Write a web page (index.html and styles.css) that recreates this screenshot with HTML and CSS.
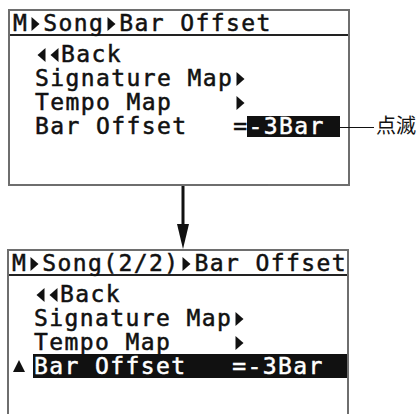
FILE: index.html
```html
<!DOCTYPE html>
<html lang="en">
<head>
  <meta charset="UTF-8">
  <title>Bar Offset</title>
  <link rel="stylesheet" href="styles.css">
</head>
<body>
  <div class="screen">
    <div class="title">M<svg class="tri" viewBox="0 0 10 16"><polygon points="1,1 9,8 1,15"/></svg>Song<svg class="tri" viewBox="0 0 10 16"><polygon points="1,1 9,8 1,15"/></svg>Bar Offset</div>
    <div class="menu">
      <div class="row"><svg class="back" viewBox="0 0 10 16"><polygon points="9,1 1,8 9,15"/></svg><svg class="back" viewBox="0 0 10 16"><polygon points="9,1 1,8 9,15"/></svg>Back</div>
      <div class="row">Signature Map<svg class="tri" viewBox="0 0 10 16"><polygon points="1,1 9,8 1,15"/></svg></div>
      <div class="row">Tempo Map    <svg class="tri" viewBox="0 0 10 16"><polygon points="1,1 9,8 1,15"/></svg></div>
      <div class="row">Bar Offset   =<span class="blink">-3Bar <span class="callout">点滅</span></span></div>
    </div>
  </div>

  <div class="arrow">
    <svg width="12" height="63" viewBox="0 0 12 63"><rect x="4.5" y="0" width="3" height="40"/><polygon points="0,38 12,38 6,63"/></svg>
  </div>

  <div class="screen screen-open">
    <div class="title">M<svg class="tri" viewBox="0 0 10 16"><polygon points="1,1 9,8 1,15"/></svg>Song(2/2)<svg class="tri" viewBox="0 0 10 16"><polygon points="1,1 9,8 1,15"/></svg>Bar Offset</div>
    <div class="menu">
      <div class="row"><svg class="back" viewBox="0 0 10 16"><polygon points="9,1 1,8 9,15"/></svg><svg class="back" viewBox="0 0 10 16"><polygon points="9,1 1,8 9,15"/></svg>Back</div>
      <div class="row">Signature Map<svg class="tri" viewBox="0 0 10 16"><polygon points="1,1 9,8 1,15"/></svg></div>
      <div class="row">Tempo Map    <svg class="tri" viewBox="0 0 10 16"><polygon points="1,1 9,8 1,15"/></svg></div>
      <div class="row row-selected"><svg class="cursor" viewBox="0 0 12 12"><polygon points="6,0 12,12 0,12"/></svg><span class="sel">Bar Offset   =-3Bar</span></div>
    </div>
  </div>
</body>
</html>
```

FILE: styles.css
```css
body {
  margin: 0;
  background: #fff;
  overflow: hidden;
}
.screen {
  width: 338px;
  height: 173px;
  margin: 9px 0 0 8px;
  border: 2px solid #6e6e6e;
  font-family: "DejaVu Sans Mono", monospace;
  font-size: 23px;
  letter-spacing: 1.4px;
  -webkit-text-stroke: 0.5px currentColor;
  color: #111;
}
.title {
  height: 22px;
  line-height: 22px;
  padding: 1px 0 0 3px;
  border-bottom: 2px solid #222;
  white-space: pre;
}
.menu {
  padding: 6px 0 0 25px;
}
.row {
  height: 24px;
  line-height: 24px;
  white-space: pre;
}
svg {
  fill: #111;
}
.tri {
  width: 15px;
  height: 16px;
  vertical-align: -1px;
}
.back {
  width: 13px;
  height: 16px;
  vertical-align: -1px;
}
.blink {
  position: relative;
  display: inline-block;
  margin-left: -1px;
  padding-left: 1px;
  height: 21px;
  line-height: 21px;
  background: #111;
  color: #fff;
}
.callout {
  position: absolute;
  left: 100%;
  top: -2px;
  padding-left: 36px;
  font-family: "Noto Sans CJK JP", sans-serif;
  font-size: 20px;
  letter-spacing: 0;
  -webkit-text-stroke: 0;
  color: #111;
}
.callout::before {
  content: "";
  position: absolute;
  left: 0;
  top: 13px;
  width: 34px;
  height: 1px;
  background: #111;
}
.arrow {
  display: flex;
  padding-left: 177px;
  height: 63px;
}
.screen-open {
  height: 200px;
  margin-top: 0;
  margin-left: 7px;
  border-bottom: none;
}
.row-selected {
  display: flex;
  margin-left: -25px;
  height: 24px;
}
.cursor {
  width: 12px;
  height: 12px;
  margin: 6px 8px 0 4px;
}
.sel {
  flex: 1;
  background: #111;
  color: #fff;
  padding-left: 1px;
}
```
